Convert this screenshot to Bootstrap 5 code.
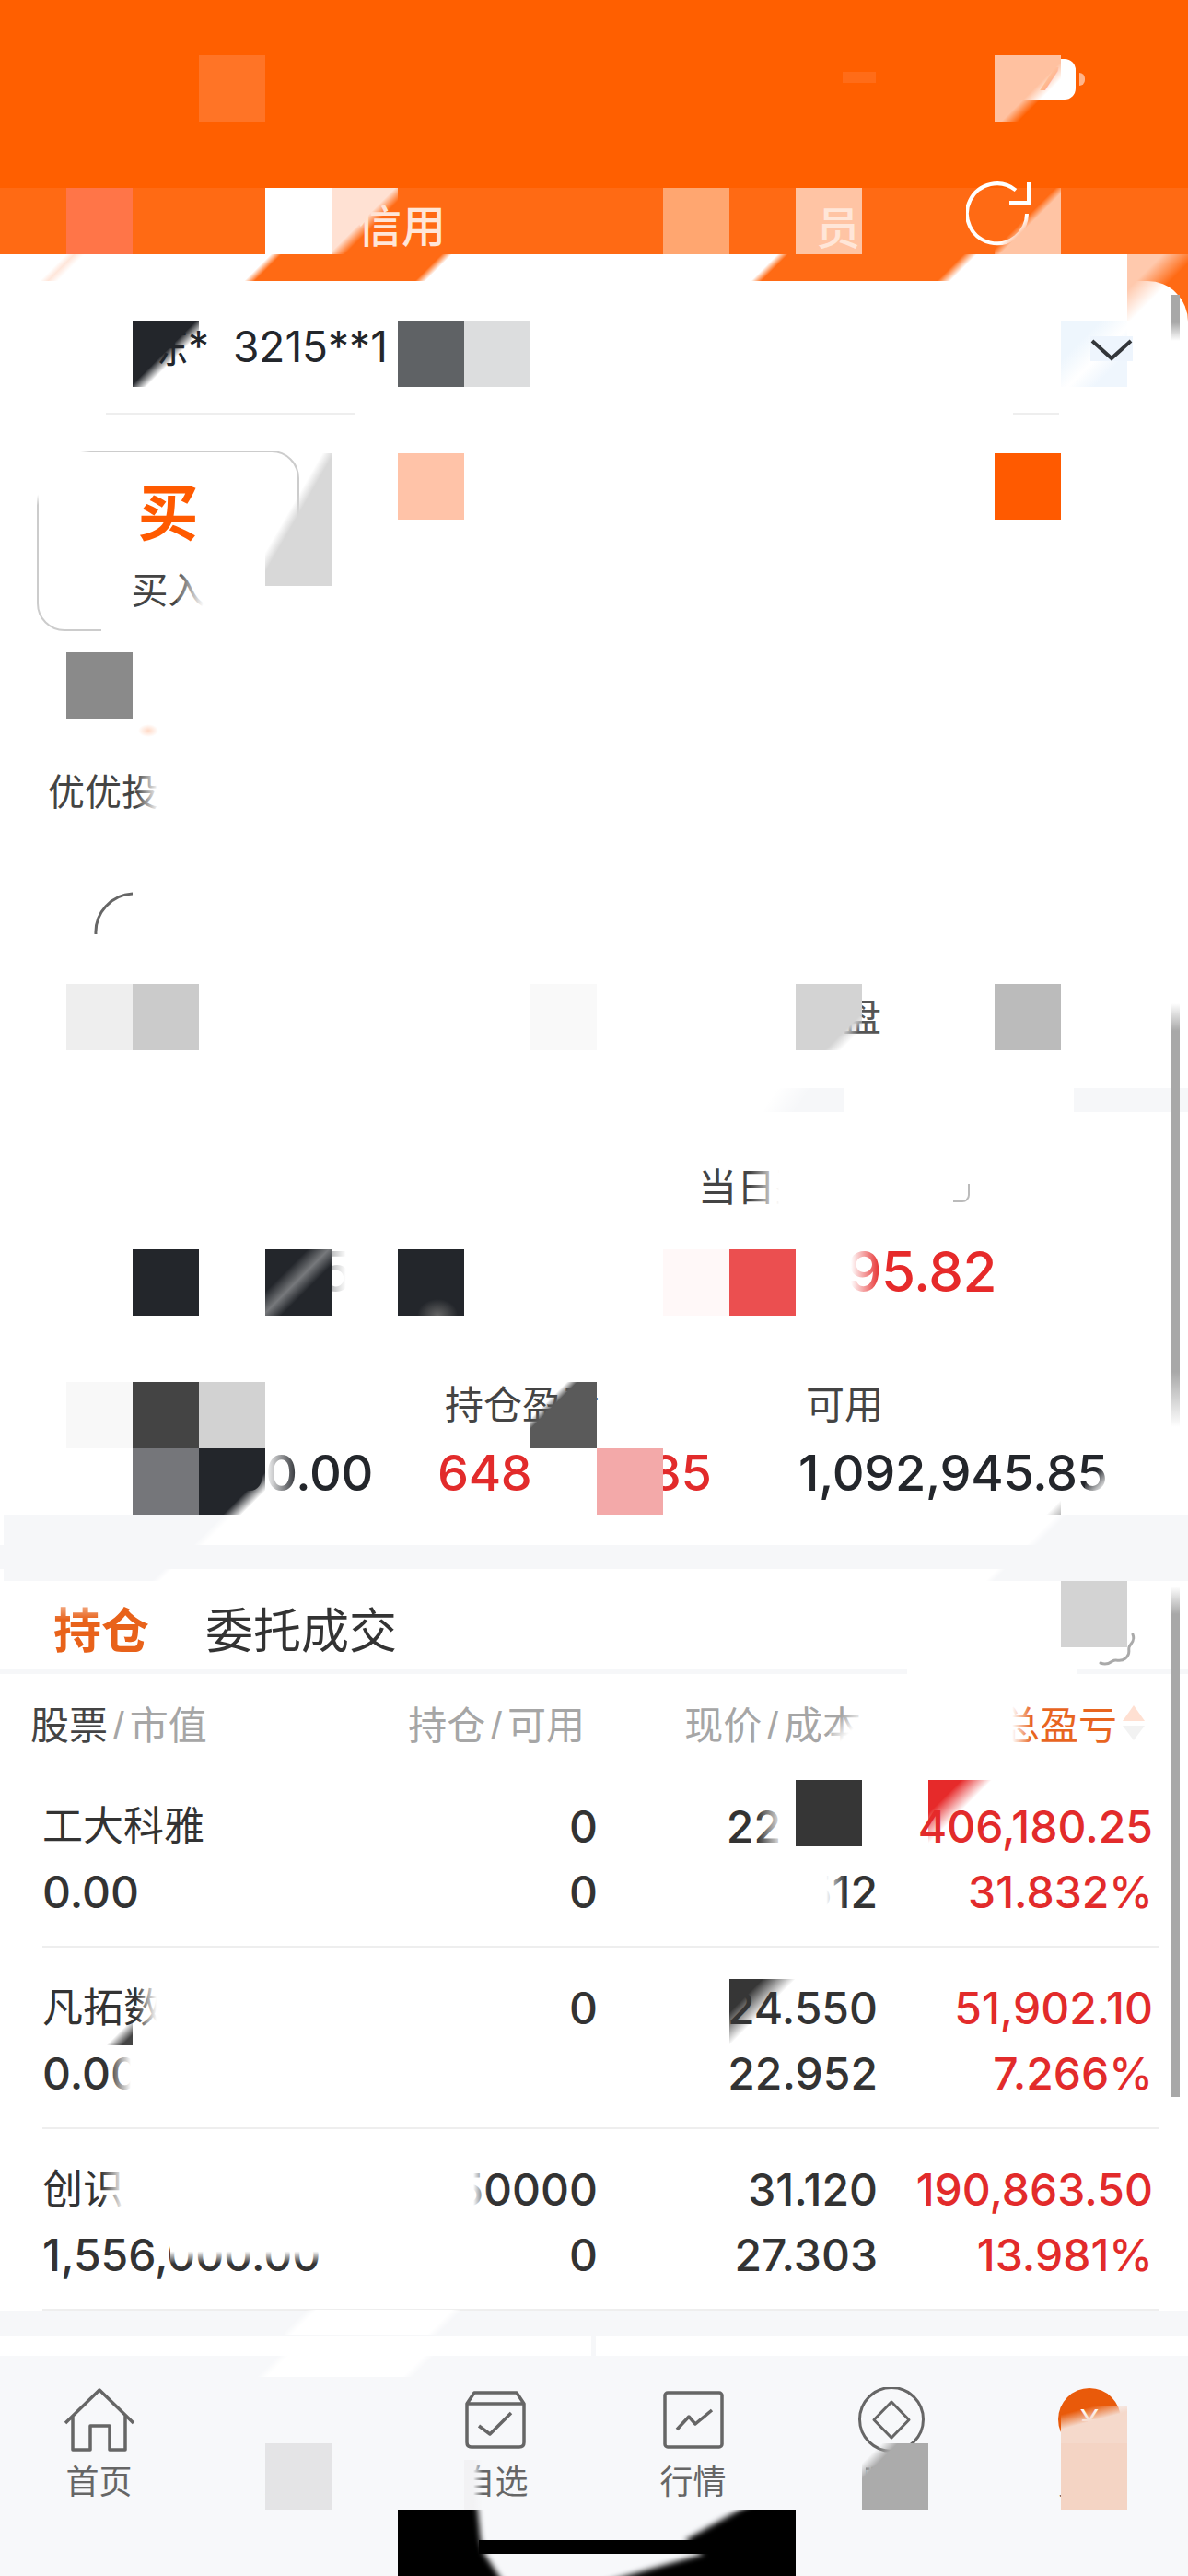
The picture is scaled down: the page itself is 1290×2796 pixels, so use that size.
<!DOCTYPE html>
<html lang="zh-CN">
<head>
  <meta charset="UTF-8">
  <title>持仓</title>
  <link rel="stylesheet" href="https://cdn.jsdelivr.net/npm/bootstrap@5.3.0/dist/css/bootstrap.min.css">
  <style>
    body {
      font-family: "Inter", "Noto Sans CJK SC", sans-serif;
      background-color: #fff;
      color: #333;
    }

    .phone { position: relative; width: 1290px; height: 2796px; overflow: hidden; background: #fff; }
    .cn { font-family: "Noto Sans CJK SC", sans-serif; }

    /* top bars */
    .status-area { height: 204px; background: #ff5f00; padding: 64px 112px 0 0; }
    .batt { width: 80px; height: 44px; background: #fff; border-radius: 12px; color: #ffab7a; font-size: 34px; font-weight: 700; line-height: 44px; text-align: right; padding-right: 20px; font-style: italic; }
    .batt-nub { width: 6px; height: 14px; margin: 15px 0 0 4px; background: #ffb48a; border-radius: 0 6px 6px 0; }
    .tab-band { height: 101px; background: #ff6a14; position: relative; }
    .tab-txt { font-size: 48px; line-height: 60px; color: #ffe6d8; font-weight: 500; font-family: "Noto Sans CJK SC", sans-serif; }
    .tab-credit { padding: 8px 0 0 388px; }
    .tab-staff { padding: 10px 0 0 402px; }
    .tab-refresh { margin: -10px 0 0 115px; }
    .over { position: relative; z-index: 6; }

    /* account */
    .sheet-back { background: linear-gradient(#ff6a14 60px, #fff 60px); }
    .sheet-head { height: 145px; background: #fff; border-top-right-radius: 44px; padding: 40px 60px 0 158px; border-bottom: 2px solid #eee; }
    .acct-txt { font-size: 46px; line-height: 56px; color: #23262b; white-space: pre; }
    .chev { margin-top: 20px; }

    /* quick actions */
    .action-area { height: 731px; padding: 39px 0 0 40px; }
    .buy-box { width: 285px; height: 196px; border: 2px solid #ccc; border-radius: 30px; text-align: center; }
    .buy-big { font-size: 66px; line-height: 70px; margin-top: 26px; color: #ff5a00; font-weight: 700; }
    .buy-small { font-size: 40px; line-height: 44px; margin-top: 29px; color: #444; }
    .yy-label { margin: 147px 0 0 12px; font-size: 40px; line-height: 50px; color: #444; }
    .arc-icon { display: block; margin: 86px 0 0 62px; }
    .pan-frag { margin: 64px 0 0 875px; font-size: 42px; line-height: 42px; color: #555; }

    .gap-band { height: 26px; background: #f6f7f9; }
    .gap-band-wide { height: 72px; background: #f6f7f9; }
    .gap-band-foot { height: 27px; background: #f6f7f9; }

    /* account summary */
    .sum-area { height: 437px; padding-top: 52px; }
    .sum-top { display: grid; grid-template-columns: 758px 1fr; }
    .sum-lbl { font-size: 42px; line-height: 54px; color: #444; font-family: "Noto Sans CJK SC", sans-serif; }
    .sum-big { font-size: 60px; line-height: 80px; font-weight: 500; margin-top: 27px; letter-spacing: -.5px; }
    .sum-left { padding-left: 307px; color: #23262b; }
    .sum-right { padding-right: 208px; color: #e62a2a; text-align: right; }
    .sum-cols { display: grid; grid-template-columns: 475px 392px 1fr; }
    .sum-cols-l { margin-top: 75px; }
    .sum-val { font-size: 54px; line-height: 70px; font-weight: 500; margin-top: 15px; letter-spacing: -.3px; white-space: nowrap; }
    .txt-red { color: #e22b2b; }
    .txt-ink { color: #23262b; }
    .end-405 { padding-right: 70px; text-align: right; }

    /* position tabs + table */
    .pos-tabs { height: 101px; padding: 20px 50px 0 58px; border-bottom: 5px solid #f6f7f9; font-size: 52px; line-height: 62px; font-family: "Noto Sans CJK SC", sans-serif; gap: 61px; }
    .pos-on { color: #e8621a; font-weight: 700; }
    .pos-off { color: #333; }
    .tbl-head { height: 100px; display: grid; grid-template-columns: 367px 235px 300px 310px; padding: 28px 0 0 33px; font-size: 42px; line-height: 50px; color: #a6a6a6; font-family: "Noto Sans CJK SC", sans-serif; }
    .tbl-head .dk { color: #444; }
    .tbl-head .hot { color: #e8651f; }
    .sl { font-family: "Liberation Sans", sans-serif; margin: 0 6px; }
    .pos-row { height: 197px; margin-left: 46px; width: 1212px; border-bottom: 2px solid #eee; display: grid; grid-template-columns: 354px 249px 304px 299px; align-content: start; padding-top: 30px; font-size: 48px; line-height: 71px; font-weight: 500; color: #333; white-space: nowrap; }
    .pos-name { font-size: 44px; font-weight: 400; font-family: "Noto Sans CJK SC", sans-serif; margin-top: -3px; }
    .pos-row .val { text-align: right; }
    .pos-row .up { text-align: right; color: #e22b2b; }

    /* bottom */
    .foot-strip { height: 22px; gap: 5px; background: #f6f7f9; }
    .foot-l { width: 642px; background: #fff; }
    .foot-r { flex: 1; background: #fff; }
    .bar-nav { height: 240px; background: #f7f8fa; display: grid; grid-template-columns: repeat(6, 1fr); padding-top: 34px; }
    .bar-item { text-align: center; }
    .bar-ico { display: block; margin: 0 auto; width: 80px; height: 72px; }
    .bar-lbl { font-size: 36px; line-height: 36px; margin-top: 10px; color: #666; font-family: "Noto Sans CJK SC", sans-serif; }

    /* pixelated cover blocks over the page */
    #covers { position: absolute; inset: 0; z-index: 5; pointer-events: none; }
    #covers div { position: absolute; }
    .corner-frag { position: absolute; left: 1035px; top: 1285px; width: 18px; height: 20px; border-right: 2px solid #bbb; border-bottom: 2px solid #bbb; border-bottom-right-radius: 8px; z-index: 6; }
    .home-ind { position: absolute; left: 432px; top: 2724px; z-index: 6; display: block; }
  </style>
</head>
<body>

<div class="phone">

  <div class="status-area d-flex justify-content-end">
    <div class="batt">97</div>
    <div class="batt-nub"></div>
  </div>

  <div class="tab-band d-flex">
    <div class="tab-txt tab-credit">信用</div>
    <div class="tab-txt tab-staff over">员</div>
    <svg class="tab-refresh" width="76" height="74" viewBox="0 0 76 74" fill="none" stroke="#fff" stroke-width="4">
      <path d="M66 36a32.500 32.500 0 1 1-12-25.500" transform="translate(0 2)"/>
      <path d="M68 4v22H47"/>
    </svg>
  </div>

  <div class="sheet-back">
    <div class="sheet-head d-flex align-items-start justify-content-between">
      <div class="acct-txt"><span class="cn">陈</span>*  3215**1</div>
      <svg class="over chev" width="46" height="28" viewBox="0 0 46 28" fill="none" stroke="#33363a" stroke-width="4"><path d="M2 5l21 19L44 5"/></svg>
    </div>
  </div>

  <div class="action-area cn">
    <div class="buy-box">
      <div class="buy-big">买</div>
      <div class="buy-small">买入</div>
    </div>
    <div class="yy-label">优优投</div>
    <svg class="arc-icon" width="44" height="48" viewBox="0 0 44 48" fill="none" stroke="#666" stroke-width="3"><path d="M2 46A42 42 0 0 1 42 2"/></svg>
    <div class="pan-frag">盘</div>
  </div>

  <div class="gap-band"></div>

  <div class="sum-area">
    <div class="sum-top">
      <div></div>
      <div class="sum-lbl">当日盈亏</div>
      <div class="sum-big sum-left">45</div>
      <div class="sum-big sum-right">95.82</div>
    </div>
    <div class="sum-cols sum-cols-l">
      <div class="sum-lbl ps-5 ms-5">总市值</div>
      <div class="sum-lbl ms-2">持仓盈亏</div>
      <div class="sum-lbl ms-2">可用</div>
    </div>
    <div class="sum-cols">
      <div class="sum-val txt-ink end-405">00.00</div>
      <div class="sum-val txt-red">648,888.85</div>
      <div class="sum-val txt-ink">1,092,945.85</div>
    </div>
  </div>

  <div class="gap-band-wide"></div>

  <div class="pos-tabs d-flex align-items-start">
    <div class="pos-on">持仓</div>
    <div class="pos-off">委托成交</div>
    <svg class="ms-auto mt-4" width="60" height="60" viewBox="0 0 60 60" fill="none" stroke="#aaa" stroke-width="3" stroke-linecap="round"><path d="M50 14c3 8-3 10-4 14s2 7-4 12-10 0-14 3-8 4-13 2"/></svg>
  </div>

  <div class="tbl-head">
    <div><span class="dk">股票</span><span class="sl">/</span>市值</div>
    <div class="text-end">持仓<span class="sl">/</span>可用</div>
    <div class="text-end">现价<span class="sl">/</span>成本</div>
    <div class="text-end hot d-flex justify-content-end">
      <span>总盈亏</span>
      <svg class="ms-1 mt-1" width="28" height="42" viewBox="0 0 28 42"><path d="M14 2l12 17H2z" fill="#ffe0d2"/><path d="M14 40L2 24h24z" fill="#f2f2f2"/></svg>
    </div>
  </div>

  <div class="pos-row">
    <div class="pos-name">工大科雅</div><div class="val">0</div><div class="val">22.950</div><div class="up">406,180.25</div>
    <div>0.00</div><div class="val">0</div><div class="val">16.512</div><div class="up">31.832%</div>
  </div>
  <div class="pos-row">
    <div class="pos-name">凡拓数创</div><div class="val">0</div><div class="val">24.550</div><div class="up">51,902.10</div>
    <div>0.00</div><div class="val">0</div><div class="val">22.952</div><div class="up">7.266%</div>
  </div>
  <div class="pos-row">
    <div class="pos-name">创识科技</div><div class="val">50000</div><div class="val">31.120</div><div class="up">190,863.50</div>
    <div>1,556,000.00</div><div class="val">0</div><div class="val">27.303</div><div class="up">13.981%</div>
  </div>

  <div class="gap-band-foot"></div>
  <div class="foot-strip d-flex">
    <div class="foot-l"></div>
    <div class="foot-r"></div>
  </div>

  <div class="bar-nav">
    <div class="bar-item">
      <svg class="bar-ico" viewBox="0 0 80 72" fill="none" stroke="#666" stroke-width="3.500" stroke-linejoin="round"><path d="M3 39L40 3l37 36M11 31v37h19V42h21v26h17V31"/></svg>
      <div class="bar-lbl">首页</div>
    </div>
    <div class="bar-item">
      <div class="bar-ico"></div>
      <div class="bar-lbl">交易</div>
    </div>
    <div class="bar-item">
      <svg class="bar-ico" viewBox="0 0 80 72" fill="none" stroke="#666" stroke-width="3.500" stroke-linejoin="round"><path d="M9 18l8-12h46l8 12v42q0 5-5 5H14q-5 0-5-5zM9 18h62M22 42l12 9 23-23"/></svg>
      <div class="bar-lbl">自选</div>
    </div>
    <div class="bar-item">
      <svg class="bar-ico" viewBox="0 0 80 72" fill="none" stroke="#666" stroke-width="3.500" stroke-linejoin="round"><rect x="9" y="6" width="62" height="59" rx="3"/><path d="M22 46l13-14 7 8 18-15"/></svg>
      <div class="bar-lbl">行情</div>
    </div>
    <div class="bar-item">
      <svg class="bar-ico" viewBox="0 0 80 72" fill="none" stroke="#666" stroke-width="3"><circle cx="40" cy="35" r="34.500"/><path d="M40 16l19 19.500L40 55 21 35.500z" stroke-linejoin="round"/></svg>
      <div class="bar-lbl">理财</div>
    </div>
    <div class="bar-item">
      <svg class="bar-ico" viewBox="0 0 80 72"><circle cx="40" cy="35" r="34" fill="#e95a0a"/><text x="40" y="47" text-anchor="middle" font-size="34" fill="#fff" font-family="Liberation Sans, sans-serif">¥</text></svg>
      <div class="bar-lbl">我的</div>
    </div>
  </div>

  <div class="corner-frag"></div>

  <svg class="home-ind" width="432" height="72" viewBox="0 0 432 72">
    <defs><filter id="soft" x="-10%" y="-20%" width="120%" height="140%"><feGaussianBlur stdDeviation="3"/></filter></defs>
    <rect width="432" height="72" fill="#000"/>
    <path d="M86 -8L386 -8L312 33L332 48L220 80L115 80L94 48L90 33Z" fill="#f7f8fa" filter="url(#soft)"/>
    <rect x="88" y="33" width="260" height="15" fill="#000"/>
  </svg>

  <div id="covers"></div>
</div>

<script src="https://cdn.jsdelivr.net/npm/bootstrap@5.3.0/dist/js/bootstrap.bundle.min.js"></script>
<script>
  // blocks sit on a 72px grid (x = 72k, y = 60 + 72k), streaks are soft-edged
  const clear = "rgba(255,255,255,0)";
  const g = (stops) => `linear-gradient(135deg,${stops})`;
  const tiles = [
    // status bar / tabs
    [216, 60, 72, 72, "#ff7426"],
    [1080, 60, 72, 72, g("#ffc1a0 55%,rgba(255,193,160,0) 68%")],
    [915, 78, 36, 12, "#ff6c18"],
    [72, 204, 72, 72, "#ff7548"],
    [288, 204, 72, 72, "#fff"],
    [360, 204, 72, 72, g("#ffe1d3 48%,rgba(255,225,211,0) 60%")],
    [720, 204, 72, 72, "#ffa670"],
    [864, 204, 72, 72, "#ffc4a4"],
    [1080, 204, 72, 72, g("rgba(255,196,164,0) 46%,#ffc4a4 54%")],
    // white strip under tabs
    [0, 276, 330, 29, g("#fff 208px,rgba(255,255,255,0) 216px")],
    [40, 276, 60, 29, g("rgba(255,230,218,0) 36%,#ffe6da 46%,rgba(255,230,218,0) 58%")],
    [440, 276, 420, 29, g(`${clear} 28px,#fff 36px,#fff 286px,${clear} 294px`)],
    [990, 276, 234, 29, g(`${clear} 40px,#fff 50px`)],
    [1224, 276, 66, 72, g("#ffc9ad 28%,rgba(255,201,173,0) 55%")],
    [1272, 320, 9, 50, "linear-gradient(180deg,#a8a8a8 60%,rgba(168,168,168,0))"],
    // account row
    [144, 348, 72, 72, g("#23262b 48%,rgba(35,38,43,0) 60%")],
    [416, 350, 16, 50, `linear-gradient(90deg,${clear},rgba(255,255,255,.85))`],
    [432, 348, 72, 72, "#5f6265"],
    [504, 348, 72, 72, "#dcddde"],
    [1152, 348, 72, 72, g("#eef6fd 30%,#fff 55%,#eff6fd 75%")],
    [1184, 365, 46, 27, "#eef5fd"],
    [0, 446, 115, 6, "#fff"],
    [385, 446, 715, 6, "#fff"],
    [1150, 446, 140, 6, "#fff"],
    // quick actions
    [30, 480, 70, 100, g(`#fff 48px,${clear} 56px`)],
    [288, 492, 72, 144, "linear-gradient(120deg,rgba(216,216,216,0) 40%,#d8d8d8 48%)"],
    [288, 636, 60, 60, "#fff"],
    [110, 672, 180, 20, "#fff"],
    [192, 612, 44, 50, `linear-gradient(100deg,${clear},#fff 70%)`],
    [432, 492, 72, 72, "#ffc3a8"],
    [1080, 492, 72, 72, "#ff5a00"],
    [72, 708, 72, 72, "#8a8a8a"],
    [150, 786, 22, 14, "radial-gradient(#ffd9c6,rgba(255,217,198,0) 70%)"],
    [148, 830, 34, 50, `linear-gradient(90deg,${clear},#fff 70%)`],
    [72, 1068, 72, 72, "#eee"],
    [144, 1068, 72, 72, "#cbcbcb"],
    [576, 1068, 72, 72, "#f9f9f9"],
    [864, 1068, 72, 72, g("#d3d3d3 72%,rgba(211,211,211,0) 84%")],
    [936, 1068, 30, 18, "#fff"],
    [1080, 1068, 72, 72, "#bbb"],
    // separator masks
    [0, 1181, 900, 26, `linear-gradient(125deg,#fff 92%,${clear} 96%)`],
    [916, 1181, 250, 26, "#fff"],
    // summary
    [815, 1260, 222, 56, `linear-gradient(90deg,${clear},#fff 14%)`],
    [144, 1356, 72, 72, "#23262b"],
    [288, 1356, 72, 72, g("#23262b 32%,#77797c 48%,#23262b 62%")],
    [360, 1356, 26, 50, `linear-gradient(90deg,rgba(255,255,255,.7),#fff 60%)`],
    [432, 1356, 72, 72, "radial-gradient(ellipse 22px 18px at 60% 100%,#666,#23262b)"],
    [720, 1356, 72, 72, "#fff8f8"],
    [792, 1356, 72, 72, "#eb4f50"],
    [864, 1356, 96, 72, `linear-gradient(90deg,#fff 60px,${clear} 92px)`],
    [72, 1500, 72, 72, "#f8f8f8"],
    [144, 1500, 72, 72, "#444"],
    [216, 1500, 72, 72, "#d2d2d2"],
    [144, 1572, 72, 72, "#75767a"],
    [216, 1572, 72, 72, g("#23262b 68%,rgba(35,38,43,0) 82%")],
    [288, 1572, 36, 56, `linear-gradient(90deg,#fff,${clear})`],
    [576, 1500, 72, 72, g("rgba(90,90,90,0) 28px,#5a5a5a 36px")],
    [576, 1572, 72, 72, "#fff"],
    [648, 1572, 72, 72, "#f3a9a9"],
    [1135, 1625, 17, 19, g("rgba(187,187,187,0) 55%,#bbb")],
    [1178, 1575, 30, 55, g(`${clear} 40%,rgba(255,255,255,.9) 70%`)],
    // wide band masks
    [0, 1644, 4, 33, "#fff"],
    [200, 1644, 960, 33, g(`${clear} 30px,#fff 38px,#fff 670px,${clear} 678px`)],
    [150, 1703, 950, 13, g(`${clear} 20px,#fff 26px,#fff 660px,${clear} 666px`)],
    [0, 1703, 4, 13, "#fff"],
    // holdings tabs
    [58, 1738, 60, 20, `linear-gradient(180deg,rgba(255,255,255,.6),${clear})`],
    [1152, 1716, 72, 72, "#d3d3d3"],
    [985, 1808, 185, 10, "#fff"],
    [900, 1845, 40, 50, g(`${clear} 35%,#fff 65%`)],
    [1082, 1845, 38, 52, `linear-gradient(90deg,#fff 45%,${clear})`],
    // holdings rows
    [864, 1932, 72, 72, "#363636"],
    [936, 1950, 22, 55, "#fff"],
    [822, 1955, 42, 55, `linear-gradient(90deg,${clear},#fff 70%)`],
    [780, 2025, 138, 56, `linear-gradient(90deg,#fff 85%,${clear})`],
    [1008, 1932, 72, 72, g("#e62a2a 25%,rgba(230,42,42,0) 48%")],
    [792, 2148, 72, 72, g("#363636 25%,rgba(54,54,54,0) 50%")],
    [72, 2148, 72, 72, g("rgba(68,68,68,0) 80%,#444 92%")],
    [148, 2150, 110, 60, `linear-gradient(90deg,${clear},#fff 22px)`],
    [118, 2220, 40, 60, `linear-gradient(90deg,${clear},#fff 60%)`],
    [620, 2220, 40, 60, "#fff"],
    [110, 2345, 120, 55, `linear-gradient(90deg,${clear},#fff 24px)`],
    [498, 2350, 40, 50, `linear-gradient(90deg,#fff 40%,${clear} 80%)`],
    [185, 2423, 170, 34, `linear-gradient(180deg,#fff 60%,${clear})`],
    // bottom bar
    [310, 2507, 190, 27, g(`${clear} 16px,#fff 24px,#fff 128px,${clear} 136px`)],
    [280, 2556, 190, 24, g(`${clear} 16px,#fff 24px,#fff 128px,${clear} 136px`)],
    [288, 2652, 72, 72, "#e4e4e6"],
    [504, 2670, 20, 54, "linear-gradient(90deg,#f2f2f4 50%,rgba(247,248,250,0))"],
    [926, 2664, 14, 44, "#f7f8fa"],
    [936, 2652, 72, 72, g("rgba(171,171,171,0) 15%,#ababab 27%")],
    [1142, 2664, 12, 44, "#f7f8fa"],
    [1152, 2612, 72, 40, "linear-gradient(165deg,rgba(245,217,203,0) 15%,#f5d9cb 42%)"],
    [1152, 2652, 72, 72, "#f4d4c4"],
    // scrollbar pieces left over
    [1272, 1089, 9, 460, "linear-gradient(180deg,rgba(168,168,168,0),#a8a8a8 30px,#a8a8a8 400px,rgba(168,168,168,0))"],
    [1272, 1722, 9, 554, "linear-gradient(180deg,rgba(168,168,168,0),#a8a8a8 30px)"]
  ];

  const covers = document.getElementById("covers");
  tiles.forEach(([x, y, w, h, bg]) => {
    const el = document.createElement("div");
    el.style.cssText = `left:${x}px;top:${y}px;width:${w}px;height:${h}px;background:${bg}`;
    covers.appendChild(el);
  });
</script>

</body>
</html>
